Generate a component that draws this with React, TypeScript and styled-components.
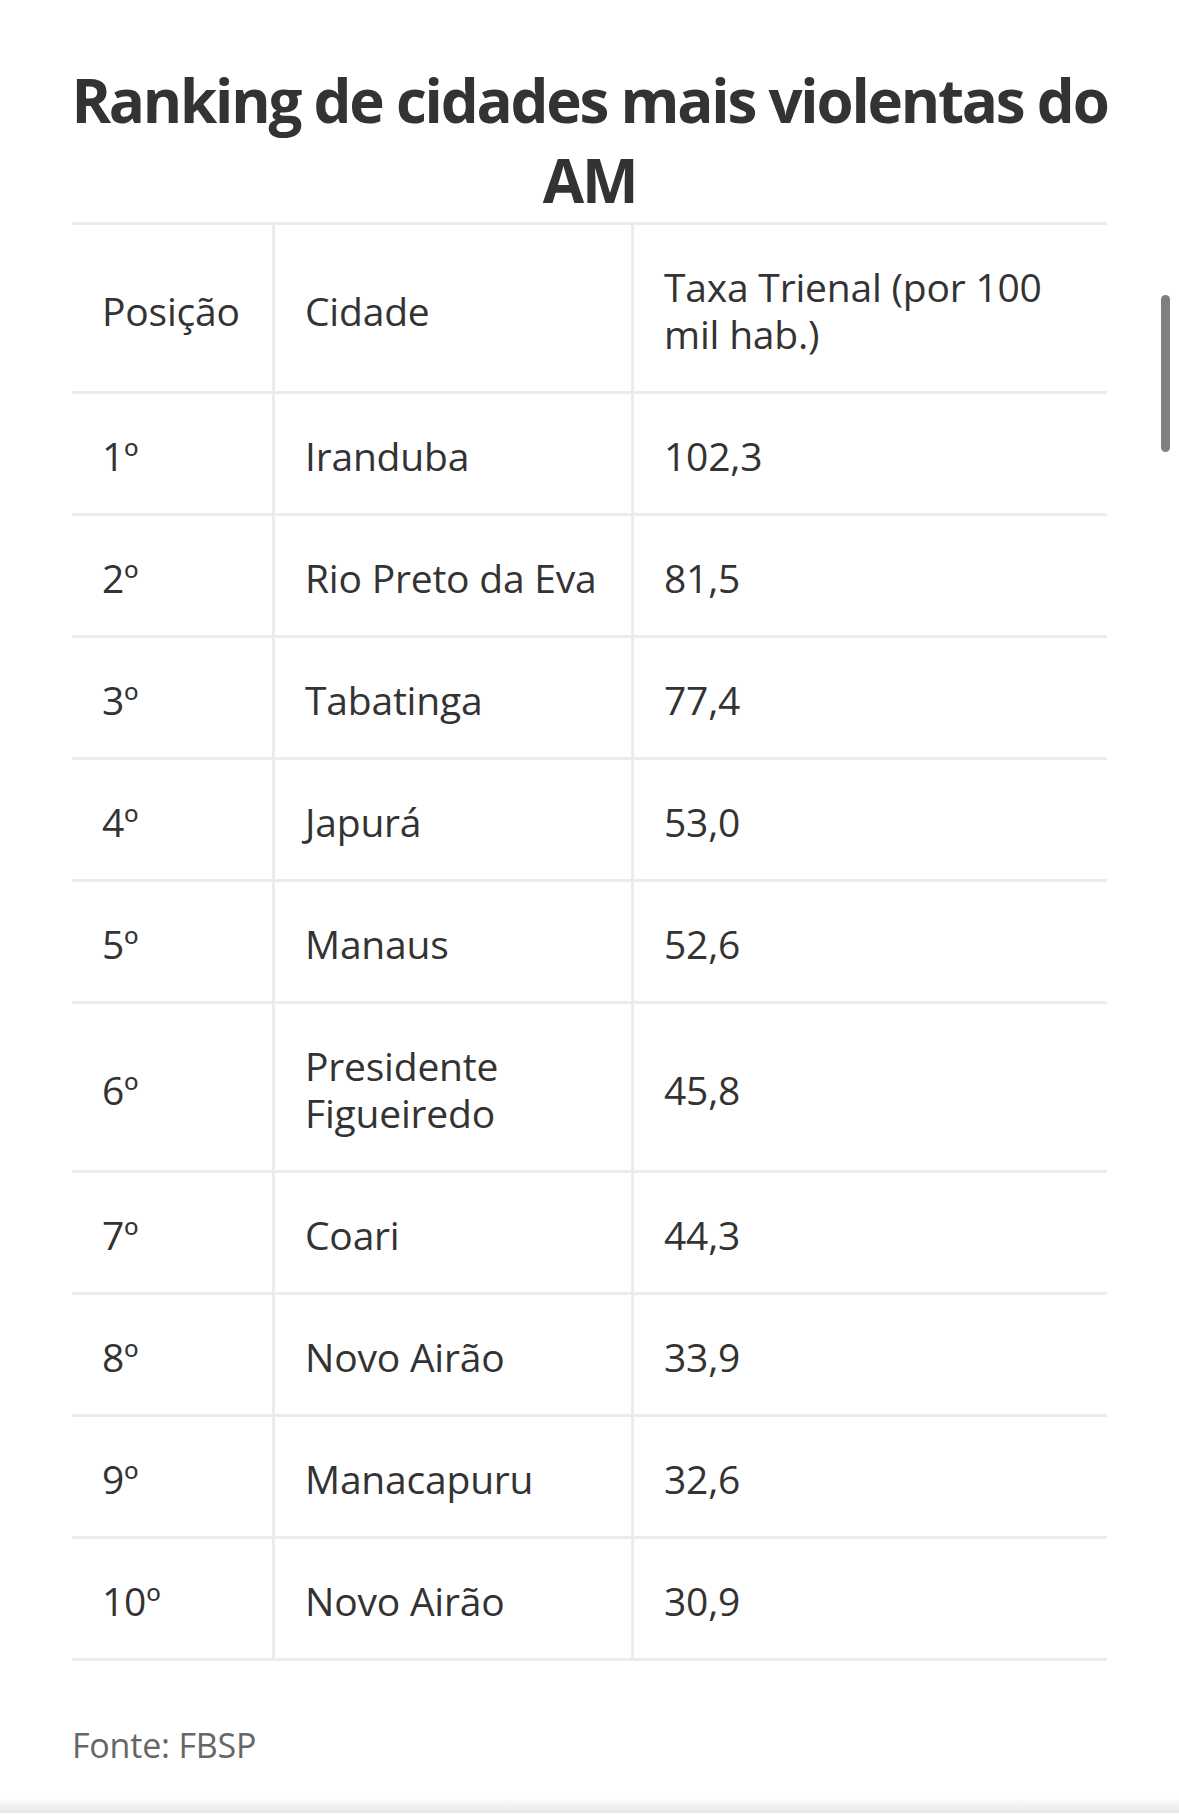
import React from "react";
import styled, { createGlobalStyle } from "styled-components";

const GlobalStyle = createGlobalStyle`
  *, *::before, *::after { box-sizing: border-box; }
  html, body { margin: 0; padding: 0; background: #ffffff; }
  body { font-family: "Open Sans", "Noto Sans", Arial, sans-serif; color: #333333; }
`;

const Page = styled.div`
  position: relative;
  width: 1179px;
  min-height: 1818px;
  display: flex;
  flex-direction: column;
  padding: 60px 72px 0;
`;

const Title = styled.h1`
  margin: 0 -16px 2px;
  font-family: "Open Sans", Arial, sans-serif;
  font-size: 60px;
  font-weight: 700;
  line-height: 80px;
  letter-spacing: -2.2px;
  text-align: center;
  color: #333333;
`;

const Table = styled.table`
  width: 100%;
  table-layout: fixed;
  border-collapse: separate;
  border-spacing: 0;
  border-top: 3px solid #ececec;
`;

const Cell = styled.td<{ $first?: boolean }>`
  padding: 38px 12px 34px 30px;
  font-size: 39px;
  line-height: 47px;
  letter-spacing: -0.2px;
  font-weight: 400;
  color: #333333;
  text-align: left;
  vertical-align: middle;
  border-bottom: 3px solid #ececec;
  border-left: ${(p) => (p.$first ? "none" : "3px solid #ececec")};
`;

const HeadCell = styled(Cell).attrs({ as: "th" })``;

const Source = styled.p`
  margin: 64px 0 0;
  font-size: 34px;
  line-height: 41px;
  letter-spacing: -0.2px;
  color: #666666;
`;

const Spacer = styled.div`
  flex: 1;
`;

const BottomShade = styled.div`
  height: 15px;
  margin: 0 -72px 5px;
  background: linear-gradient(to bottom, rgba(232, 232, 232, 0), #e6e6e6);
`;

const ScrollThumb = styled.div`
  position: absolute;
  top: 295px;
  right: 9px;
  width: 9px;
  height: 157px;
  border-radius: 5px;
  background: #808080;
`;

const rows: [string, string, string][] = [
  ["1º", "Iranduba", "102,3"],
  ["2º", "Rio Preto da Eva", "81,5"],
  ["3º", "Tabatinga", "77,4"],
  ["4º", "Japurá", "53,0"],
  ["5º", "Manaus", "52,6"],
  ["6º", "Presidente Figueiredo", "45,8"],
  ["7º", "Coari", "44,3"],
  ["8º", "Novo Airão", "33,9"],
  ["9º", "Manacapuru", "32,6"],
  ["10º", "Novo Airão", "30,9"],
];

export default function App() {
  return (
    <>
      <GlobalStyle />
      <Page>
        <Title>Ranking de cidades mais violentas do AM</Title>
        <Table>
          <colgroup>
            <col style={{ width: 200 }} />
            <col style={{ width: 359 }} />
            <col />
          </colgroup>
          <thead>
            <tr>
              <HeadCell $first>Posição</HeadCell>
              <HeadCell>Cidade</HeadCell>
              <HeadCell>Taxa Trienal (por 100 mil hab.)</HeadCell>
            </tr>
          </thead>
          <tbody>
            {rows.map(([pos, city, rate]) => (
              <tr key={pos}>
                <Cell $first>{pos}</Cell>
                <Cell>{city}</Cell>
                <Cell>{rate}</Cell>
              </tr>
            ))}
          </tbody>
        </Table>
        <Source>Fonte: FBSP</Source>
        <Spacer />
        <BottomShade />
        <ScrollThumb />
      </Page>
    </>
  );
}
